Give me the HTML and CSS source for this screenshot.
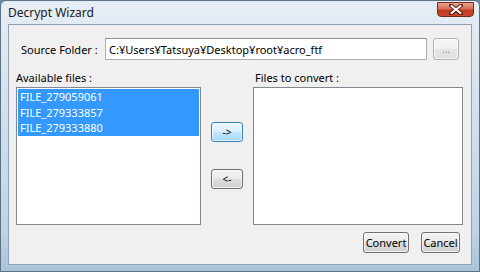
FILE: index.html
```html
<!DOCTYPE html>
<html>
<head>
<meta charset="utf-8">
<link rel="stylesheet" href="styles.css">
</head>
<body>
<div class="window">
  <div class="titlebar">
    <span class="title">Decrypt Wizard</span>
    <div class="close">
      <svg width="14" height="11" viewBox="0 0 14 11">
        <path d="M2 1.5 L12 9.5 M12 1.5 L2 9.5" stroke="#5a1a10" stroke-width="4" stroke-linecap="round"/>
        <path d="M2.5 2 L11.5 9 M11.5 2 L2.5 9" stroke="#ffffff" stroke-width="2.2" stroke-linecap="round"/>
      </svg>
    </div>
  </div>
  <div class="client">
    <div class="source-row">
      <span class="label">Source Folder :</span>
      <div class="textbox">C:¥Users¥Tatsuya¥Desktop¥root¥acro_ftf</div>
      <div class="btn btn-dim browse">...</div>
    </div>
    <div class="lists">
      <span class="label">Available files :</span>
      <span></span>
      <span class="label right-label">Files to convert :</span>
      <div class="listbox">
        <div class="item sel">FILE_279059061</div>
        <div class="item sel">FILE_279333857</div>
        <div class="item sel">FILE_279333880</div>
      </div>
      <div class="movers">
        <div class="btn btn-hot mover">-&gt;</div>
        <div class="btn mover">&lt;-</div>
      </div>
      <div class="listbox"></div>
    </div>
    <div class="actions">
      <div class="btn convert">Convert</div>
      <div class="btn cancel">Cancel</div>
    </div>
  </div>
</div>
</body>
</html>
```

FILE: styles.css
```css
html, body {
  margin: 0;
  padding: 0;
  width: 480px;
  height: 272px;
  overflow: hidden;
  background: #6c8aa3;
}
body {
  font-family: "Noto Sans", "Noto Sans CJK JP", sans-serif;
  font-size: 11px;
  color: #000;
}
.window {
  box-sizing: border-box;
  width: 480px;
  height: 272px;
  display: flex;
  flex-direction: column;
  padding: 0 7px 6px 7px;
  border: 1px solid #5d7184;
  border-radius: 6px 6px 0 0;
  background: linear-gradient(180deg, #e6eef5 0%, #d8e4ee 30%, #cbdbe9 60%, #bfd3e4 85%, #a9c4da 100%);
}
.titlebar {
  height: 23px;
  display: flex;
  align-items: flex-start;
  justify-content: space-between;
}
.title {
  padding-top: 3px;
  font-size: 12px;
  color: #1a1a1a;
}
.close {
  width: 37px;
  height: 15px;
  margin-top: 1px;
  margin-right: -2px;
  box-sizing: border-box;
  border: 1px solid #6b2b22;
  border-radius: 0 0 4px 4px;
  background: linear-gradient(180deg, #e8a58f 0%, #d9705a 45%, #c23b21 55%, #c8482c 100%);
  display: flex;
  align-items: center;
  justify-content: center;
}
.client {
  flex: 1;
  background: #f0f0f0;
  border: 1px solid #8da2b5;
  display: flex;
  flex-direction: column;
  padding: 13px 8px 10px 7px;
}
.source-row {
  display: flex;
  align-items: center;
  padding-left: 5px;
}
.source-row .label {
  width: 84px;
}
.textbox {
  box-sizing: border-box;
  width: 322px;
  height: 22px;
  background: #fff;
  border: 1px solid #abadb3;
  border-top-color: #8e8f8f;
  padding: 3px 0 0 3px;
  white-space: nowrap;
}
.btn {
  box-sizing: border-box;
  display: flex;
  align-items: center;
  justify-content: center;
  border: 1px solid #707070;
  border-radius: 3px;
  background: linear-gradient(180deg, #f2f2f2 0%, #ebebeb 48%, #dddddd 52%, #cfcfcf 100%);
  box-shadow: inset 0 0 0 1px rgba(255,255,255,0.7);
}
.btn-dim {
  border-color: #adb2b5;
  color: #8a8a8a;
  background: linear-gradient(180deg, #f4f4f4 0%, #efefef 50%, #e6e6e6 52%, #e0e0e0 100%);
}
.browse {
  width: 26px;
  height: 22px;
  margin-left: 6px;
  font-size: 10px;
}
.lists {
  display: grid;
  grid-template-columns: 185px 52px 210px;
  grid-template-rows: 17px 138px;
  margin-top: 10px;
}
.right-label {
  padding-left: 2px;
}
.listbox {
  box-sizing: border-box;
  background: #fff;
  border: 1px solid #828790;
  padding: 1px;
}
.item {
  height: 15.7px;
  line-height: 15.7px;
  padding-left: 2px;
}
.item.sel {
  background: #3399ff;
  color: #fff;
}
.movers {
  display: flex;
  flex-direction: column;
  align-items: center;
  padding-top: 35px;
  gap: 27px;
}
.mover {
  width: 32px;
  height: 20px;
  font-size: 10px;
}
.btn-hot {
  border-color: #3c7fb1;
  background: linear-gradient(180deg, #eaf6fd 0%, #d9f0fc 48%, #bee6fd 52%, #a7d9f5 100%);
}
.actions {
  display: flex;
  justify-content: flex-end;
  gap: 12px;
  margin-top: 7px;
  padding-right: 3px;
}
.convert {
  width: 46px;
  height: 21px;
}
.cancel {
  width: 39px;
  height: 21px;
}
```
